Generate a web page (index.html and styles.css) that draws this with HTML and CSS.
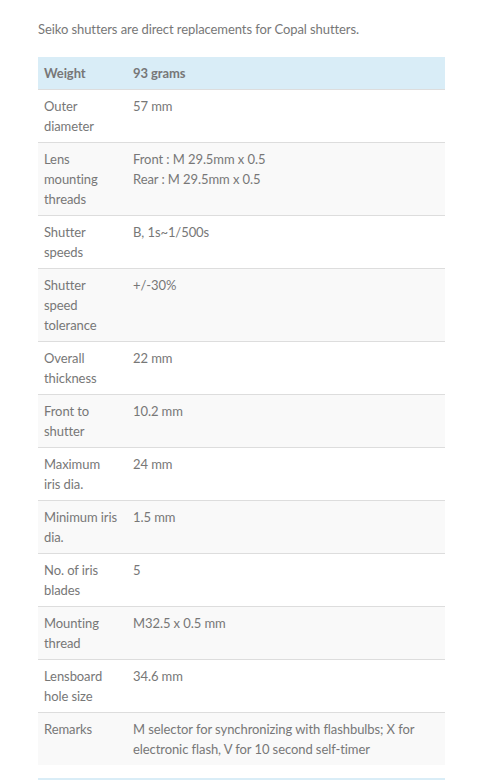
FILE: index.html
```html
<!DOCTYPE html>
<html>
<head>
<meta charset="utf-8">
<link rel="stylesheet" href="styles.css">
</head>
<body>
<div class="content">
  <p class="intro">Seiko shutters are direct replacements for Copal shutters.</p>
  <table class="spec">
    <tr class="head"><th class="label">Weight</th><th>93 grams</th></tr>
    <tr><td class="label">Outer diameter</td><td>57 mm</td></tr>
    <tr><td class="label">Lens mounting threads</td><td>Front : M 29.5mm x 0.5<br>Rear : M 29.5mm x 0.5</td></tr>
    <tr><td class="label">Shutter speeds</td><td>B, 1s~1/500s</td></tr>
    <tr><td class="label">Shutter speed tolerance</td><td>+/-30%</td></tr>
    <tr><td class="label">Overall thickness</td><td>22 mm</td></tr>
    <tr><td class="label">Front to shutter</td><td>10.2 mm</td></tr>
    <tr><td class="label">Maximum iris dia.</td><td>24 mm</td></tr>
    <tr><td class="label">Minimum iris dia.</td><td>1.5 mm</td></tr>
    <tr><td class="label">No. of iris blades</td><td>5</td></tr>
    <tr><td class="label">Mounting thread</td><td>M32.5 x 0.5 mm</td></tr>
    <tr><td class="label">Lensboard hole size</td><td>34.6 mm</td></tr>
    <tr><td class="label">Remarks</td><td>M selector for synchronizing with flashbulbs; X for electronic flash, V for 10 second self-timer</td></tr>
  </table>
  <table class="spec">
    <tr class="head"><th class="label"></th><th></th></tr>
  </table>
</div>
</body>
</html>
```
FILE: styles.css
```css
html, body {
  margin: 0;
  padding: 0;
  background: #fff;
}
.content {
  width: 407px;
  margin-left: 38px;
  font-family: Lato, "Open Sans", sans-serif;
  font-size: 13px;
  line-height: 20px;
  letter-spacing: -0.08px;
  color: #777;
}
.intro {
  margin: 19px 0 18px;
}
.spec {
  width: 100%;
  border-collapse: collapse;
  border-spacing: 0;
  margin-bottom: 13px;
}
.spec th,
.spec td {
  padding: 6px 6px;
  text-align: left;
  vertical-align: top;
  border-top: 1px solid #ddd;
}
.spec th {
  font-weight: bold;
  border-top: 0;
  height: 20px;
}
.spec .head {
  background: #d9edf7;
}
.spec .label {
  width: 75px;
  padding-right: 8px;
}
.spec tr:nth-child(odd):not(.head) {
  background: #f9f9f9;
}
```
